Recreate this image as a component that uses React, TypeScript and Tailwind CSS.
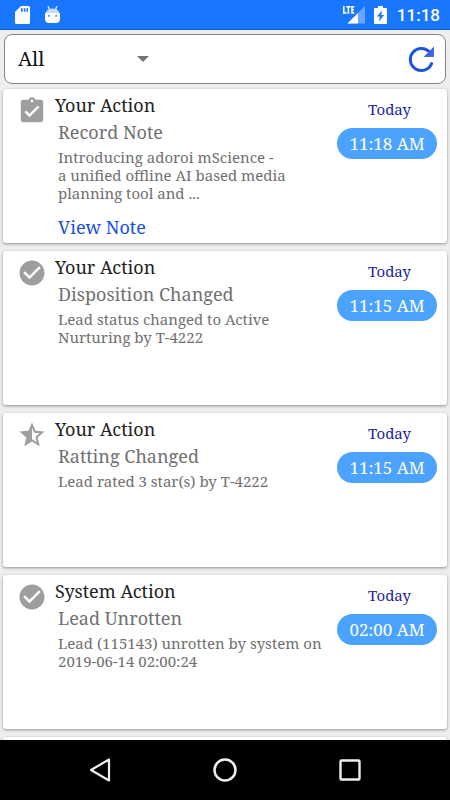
import React from "react";

type IconKind = "task" | "check" | "star";

interface Entry {
  icon: IconKind;
  owner: string;
  title: string;
  lines: string[];
  time: string;
  link?: string;
}

const entries: Entry[] = [
  {
    icon: "task",
    owner: "Your Action",
    title: "Record Note",
    lines: ["Introducing adoroi mScience -", "a unified offline AI based media", "planning tool and ..."],
    time: "11:18 AM",
    link: "View Note",
  },
  {
    icon: "check",
    owner: "Your Action",
    title: "Disposition Changed",
    lines: ["Lead status changed to Active", "Nurturing by T-4222"],
    time: "11:15 AM",
  },
  {
    icon: "star",
    owner: "Your Action",
    title: "Ratting Changed",
    lines: ["Lead rated 3 star(s) by T-4222"],
    time: "11:15 AM",
  },
  {
    icon: "check",
    owner: "System Action",
    title: "Lead Unrotten",
    lines: ["Lead (115143) unrotten by system on", "2019-06-14 02:00:24"],
    time: "02:00 AM",
  },
];

const iconPaths: Record<IconKind, string> = {
  task: "M19 3h-4.18C14.4 1.84 13.3 1 12 1c-1.3 0-2.4.84-2.82 2H5c-1.1 0-2 .9-2 2v14c0 1.1.9 2 2 2h14c1.1 0 2-.9 2-2V5c0-1.1-.9-2-2-2zm-7 0c.55 0 1 .45 1 1s-.45 1-1 1-1-.45-1-1 .45-1 1-1zm-2 14l-4-4 1.41-1.41L10 14.17l6.59-6.59L18 9l-8 8z",
  check: "M12 2C6.480 2 2 6.480 2 12s4.480 10 10 10 10-4.480 10-10S17.520 2 12 2zm-2 15l-5-5 1.410-1.410L10 14.170l7.590-7.590L19 8l-9 9z",
  star: "M22 9.240l-7.190-.62L12 2 9.190 8.630 2 9.240l5.460 4.730L5.820 21 12 17.270 18.180 21l-1.630-7.030L22 9.240zM12 15.400V6.100l1.710 4.040 4.380.38-3.320 2.880 1 4.280L12 15.400z",
};

function StatusBar() {
  return (
    <header className="flex h-[30px] shrink-0 items-center justify-between border-b border-[#0d5fe0] bg-[#1976ff] pl-[15px] pr-[10px] text-white">
      <div className="flex items-center gap-[15px]">
        <svg className="h-[18px] w-[15px]" viewBox="0 0 15 18" aria-hidden="true">
          <path fill="currentColor" d="M6 0h7.500A1.500 1.500 0 0 1 15 1.500v15a1.500 1.500 0 0 1-1.500 1.500h-12A1.500 1.500 0 0 1 0 16.500V6z" />
          <path fill="#1976ff" d="M6 2.300h1.700v3.400H6zM8.800 2.300h1.600v3.400H8.800zM11.400 2.300h1.600v3.400h-1.600z" />
        </svg>
        <svg className="h-[18px] w-[15px]" viewBox="0 0 15 18" aria-hidden="true">
          <path stroke="#e6f0ff" strokeWidth="1.300" d="M3 0l1.600 3.500M12 0l-1.600 3.500" />
          <path fill="#c5dcff" d="M1 6C2 3.500 4.500 2.500 7.500 2.500S13 3.500 14 6v1H1z" />
          <path fill="currentColor" d="M0 7h15v6c0 2.800-1.500 4-4 4H4c-2.500 0-4-1.200-4-4z" />
          <path fill="#4b93ff" d="M3 9h1.700v1.700H3zM10.300 9H12v1.700h-1.700z" />
        </svg>
      </div>
      <div className="flex items-center">
        <svg className="h-[19px] w-[23px]" viewBox="0 0 23 19" aria-hidden="true">
          <path fill="#6aa6ff" d="M23 1v17.500H5.500z" />
          <path fill="currentColor" d="M16 8v10.500H5.500z" />
          <path fill="#1976ff" d="M0 0h12.500v9H0z" />
          <path stroke="currentColor" strokeWidth="1.600" fill="none" d="M1.800 1v6.900H4.500M4.200 1.700h4.500M6.400 1.700v7M12.300 1.700H10v6.200h2.300M10 4.700h2" />
        </svg>
        <svg className="ml-[9px] h-[18px] w-[13px]" viewBox="0 0 13 18" aria-hidden="true">
          <path fill="currentColor" d="M4 0h5v2h3a1 1 0 0 1 1 1v14a1 1 0 0 1-1 1H1a1 1 0 0 1-1-1V3a1 1 0 0 1 1-1h3z" />
          <path fill="#1976ff" d="M8 4.500L2.800 10.500h3L5 15.500 10.200 9H7.300z" />
        </svg>
        <span className="ml-[10px] pt-px font-['Roboto',sans-serif] text-[17px] font-medium leading-[29px]">11:18</span>
      </div>
    </header>
  );
}

function FilterBar() {
  return (
    <div className="mx-1 mt-1 flex h-[50px] shrink-0 items-center justify-between rounded-lg border border-[#858585] bg-white pl-[13px] pr-[9px]">
      <div className="relative w-[135px]">
        <select
          aria-label="Filter actions"
          className="h-10 w-full appearance-none bg-transparent text-[20px] leading-10 text-[#111]"
          defaultValue="All"
        >
          <option>All</option>
          <option>Your Action</option>
          <option>System Action</option>
        </select>
        <svg className="pointer-events-none absolute right-1 top-[17px] h-[6px] w-3" viewBox="0 0 12 6" aria-hidden="true">
          <path fill="#757575" d="M0 0h12L6 6z" />
        </svg>
      </div>
      <button type="button" aria-label="Refresh" className="text-[#1c55dc]">
        <svg className="h-[30px] w-[30px]" viewBox="0 0 30 30" aria-hidden="true">
          <path fill="none" stroke="currentColor" strokeWidth="3" d="M26 18.300A11 11 0 1 1 24 8.700" />
          <path fill="#3f66dd" d="M28 2.500v10.500H17.500z" />
        </svg>
      </button>
    </div>
  );
}

function EntryCard({ entry }: { entry: Entry }) {
  return (
    <article className="flex h-[154px] shrink-0 rounded-[3px] bg-white pl-[14px] pr-[10px] pt-[5px] shadow-[0_1px_3px_rgba(0,0,0,0.4)]">
      <svg className="mt-[2px] h-[30px] w-[30px] shrink-0 text-[#9e9e9e]" viewBox="0 0 24 24" aria-hidden="true">
        <path fill="currentColor" d={iconPaths[entry.icon]} />
      </svg>
      <div className="ml-2 min-w-0 flex-1 whitespace-nowrap">
        <h2 className="text-[18px] leading-[22px] text-[#222]">{entry.owner}</h2>
        <div className="pl-[3px]">
          <h3 className="mt-[5px] text-[18px] leading-[22px] text-[#707070]">{entry.title}</h3>
          <p className="mt-[5px] text-[15px] leading-[18px] text-[#707070]">
            {entry.lines.map((line) => (
              <span key={line} className="block">{line}</span>
            ))}
          </p>
          {entry.link && (
            <a href="#note" className="mt-[14px] block text-[18px] leading-[22px] text-[#1a50dc]">{entry.link}</a>
          )}
        </div>
      </div>
      <div className="flex w-[100px] shrink-0 flex-col items-center pt-[5px]">
        <span className="pl-[5px] text-[15px] leading-5 text-[#1a1fa0]">Today</span>
        <time className="mt-[9px] w-full rounded-full bg-[#4ba3ff] text-center text-[17px] leading-[31px] text-white">{entry.time}</time>
      </div>
    </article>
  );
}

function NavigationBar() {
  return (
    <nav className="flex h-[60px] shrink-0 items-center justify-center gap-[95px] bg-black text-[#eee]">
      <button type="button" aria-label="Back" className="h-[30px] w-[30px]">
        <svg viewBox="0 0 30 30" aria-hidden="true">
          <path fill="none" stroke="currentColor" strokeWidth="2.200" strokeLinejoin="round" d="M24 4.500v21L6 15z" />
        </svg>
      </button>
      <button type="button" aria-label="Home" className="h-[30px] w-[30px]">
        <svg viewBox="0 0 30 30" aria-hidden="true">
          <circle cx="15" cy="15" r="10.500" fill="none" stroke="currentColor" strokeWidth="2.500" />
        </svg>
      </button>
      <button type="button" aria-label="Recent apps" className="h-[30px] w-[30px]">
        <svg viewBox="0 0 30 30" aria-hidden="true">
          <rect x="5.500" y="5.500" width="19" height="19" rx="1" fill="none" stroke="currentColor" strokeWidth="2.400" />
        </svg>
      </button>
    </nav>
  );
}

export default function App() {
  return (
    <div className="flex h-screen flex-col bg-[#eee] font-['Noto_Serif','DejaVu_Serif_Condensed',serif]">
      <StatusBar />
      <FilterBar />
      <main className="mt-[2px] flex min-h-0 flex-1 flex-col gap-2 overflow-y-auto px-[3px] pt-[3px] [scrollbar-width:none]">
        {entries.map((entry) => (
          <EntryCard key={entry.title} entry={entry} />
        ))}
        <article className="h-[154px] shrink-0 rounded-[3px] bg-white shadow-[0_1px_3px_rgba(0,0,0,0.4)]" />
      </main>
      <NavigationBar />
    </div>
  );
}
